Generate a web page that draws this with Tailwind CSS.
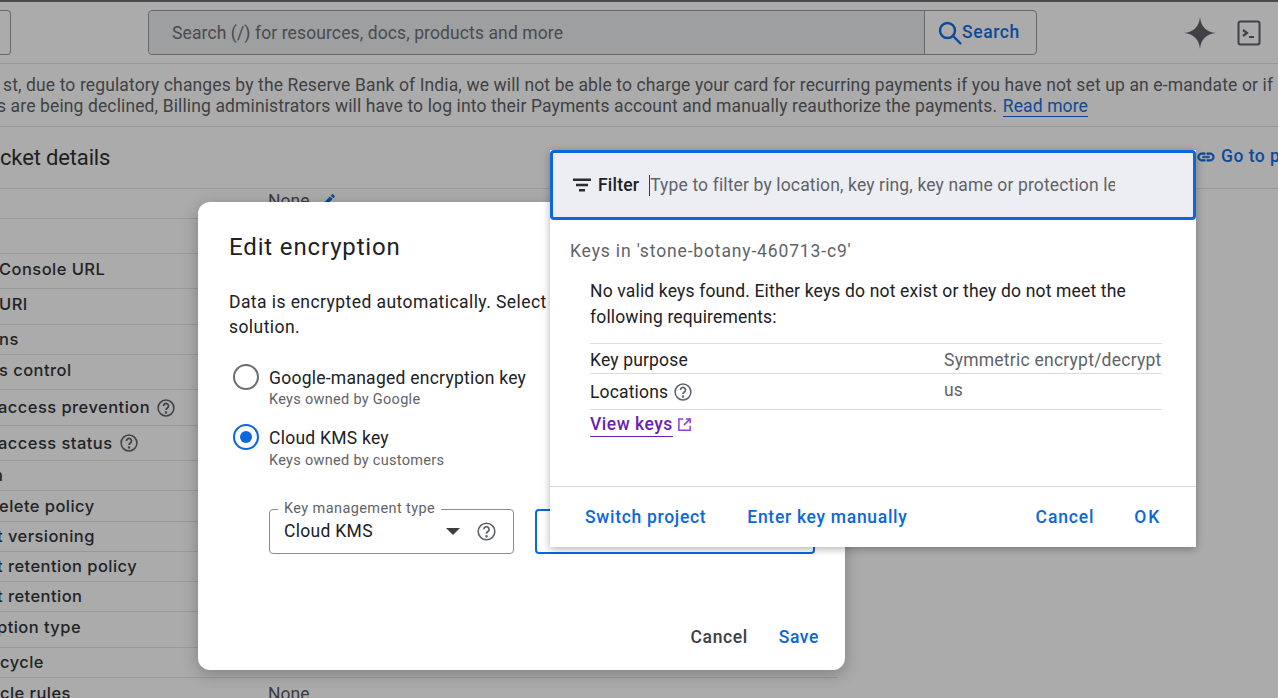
<!DOCTYPE html>
<html lang="en">
  <head>
    <meta charset="UTF-8" />
    <title>Edit encryption</title>
    <script src="https://cdn.jsdelivr.net/npm/@tailwindcss/browser@4"></script>
  </head>
  <body class="bg-[#ababab] font-['Roboto',sans-serif]">
    <div class="relative w-[1278px] h-[698px] overflow-hidden bg-[#ababab] text-[#3b3c3f]">
      <!-- top strip -->
      <div class="h-[2px] bg-[#4b484f]"></div>

      <!-- header -->
      <header class="h-[62px] flex items-start pt-[8px] border-b border-[#98999b]">
        <div class="w-[11px] h-[45px] border border-l-0 border-[#67696c] rounded-r-[4px]"></div>
        <div class="ml-[137px] w-[889px] h-[45px] flex border border-[#67696c] rounded-[4px]">
          <div class="flex-1 flex items-center pl-[23px] pt-[2px] bg-[#9d9fa1] rounded-l-[4px] text-[17.500px] tracking-[0.11px] text-[#494b4e]">Search (/) for resources, docs, products and more</div>
          <div class="w-[112px] flex items-center pl-[13px] border-l border-[#67696c] text-[#0e4a9a] text-[17.500px] font-medium tracking-[0.6px]">
            <svg class="w-[24px] h-[24px] shrink-0" viewBox="0 0 24 24" fill="none" stroke="#0e4a9a" stroke-width="2.400"><circle cx="9.500" cy="9.500" r="7.500"/><path d="M15 15l8 8"/></svg>
            Search
          </div>
        </div>
        <svg class="ml-[146px] mt-[6px] w-[34px] h-[34px]" viewBox="0 0 32 32" fill="#3f4146"><path d="M16 1C16.800 10 22 15.200 31 16 22 16.800 16.800 22 16 31 15.200 22 10 16.800 1 16 10 15.200 15.200 10 16 1Z"/></svg>
        <svg class="ml-[20px] mt-[10px] w-[24px] h-[26px]" viewBox="0 0 24 26" fill="none" stroke="#3f4146" stroke-width="2"><rect x="1.500" y="1.500" width="21" height="23" rx="2"/><path d="M6 10l4 3-4 3" stroke-width="2.200"/><path d="M12 17h5" stroke-width="2"/></svg>
      </header>

      <!-- banner -->
      <div class="h-[63px] pt-[11px] border-b border-[#98999b] whitespace-nowrap text-[17.500px] tracking-[0.125px] leading-[21px] text-[#3f4144]">
        <p class="ml-[3px]">st, due to regulatory changes by the Reserve Bank of India, we will not be able to charge your card for recurring payments if you have not set up an e-mandate or if</p>
        <p class="-ml-[3px]">s are being declined, Billing administrators will have to log into their Payments account and manually reauthorize the payments. <a class="text-[#0e4a9a] border-b border-[#0e4a9a] ml-[1px]">Read more</a></p>
      </div>

      <!-- bucket details heading -->
      <div class="h-[62px] flex items-center justify-between border-b border-[#98999b] whitespace-nowrap pb-[1px]">
        <h2 class="text-[22px] tracking-[-0.15px] text-[#1f2023]">cket details</h2>
        <div class="w-[82px] flex items-center gap-[5px] text-[#0e4a9a] text-[17.500px] font-medium tracking-[0.5px] pb-[1px]">
          <svg class="w-[20px] h-[20px] shrink-0" viewBox="0 0 24 24" fill="#0e4a9a" stroke="#0e4a9a" stroke-width="0.700"><path d="M3.900 12c0-1.710 1.390-3.100 3.100-3.100h4V7H7c-2.760 0-5 2.240-5 5s2.240 5 5 5h4v-1.900H7c-1.710 0-3.100-1.390-3.100-3.100zM8 13h8v-2H8v2zm9-6h-4v1.900h4c1.710 0 3.100 1.390 3.100 3.100s-1.390 3.100-3.100 3.100h-4V17h4c2.760 0 5-2.240 5-5s-2.240-5-5-5z"/></svg>
          Go to p
        </div>
      </div>

      <!-- details table -->
      <div class="w-[838px] font-['Inter',sans-serif] text-[16.500px] font-medium tracking-[0.45px] text-[#222327] whitespace-nowrap [&>div]:border-b [&>div]:border-[#98999b] [&>div]:flex [&>div]:items-center">
        <div class="h-[30px]"><span class="ml-[268px] pb-[4px] font-['Roboto',sans-serif] text-[17.500px] font-normal tracking-normal text-[#3b3c3f]">None</span><svg class="ml-[11px] mb-[6px] w-[17px] h-[17px]" viewBox="0 0 24 24" fill="#0e4a9a"><path d="M3 17.250V21h3.750L17.810 9.940l-3.750-3.750L3 17.250zM20.710 7.040a1 1 0 0 0 0-1.410l-2.340-2.340a1 1 0 0 0-1.410 0l-1.830 1.830 3.750 3.750 1.830-1.830z"/></svg></div>
        <div class="h-[35px]"></div>
        <div class="h-[35px]"><span class="-ml-[1px] pb-[4px]">Console URL</span></div>
        <div class="h-[36px]"><span class="-ml-[1px] pb-[5px]">URI</span></div>
        <div class="h-[30px]"><span class="-ml-[1px] pb-[1px]">ns</span></div>
        <div class="h-[35px]"><span class="-ml-[1px] pb-[4px]">s control</span></div>
        <div class="h-[36px]"><span class="-ml-[2px]">access prevention</span><svg class="ml-[6px] w-[20px] h-[20px]" viewBox="0 0 24 24" fill="none" stroke="#3f4144" stroke-width="1.800"><circle cx="12" cy="12" r="9.500"/><path d="M9 9.500a3 3 0 1 1 4.600 2.500c-1 .7-1.600 1.300-1.600 2.500" stroke-width="2"/><circle cx="12" cy="17.500" r=".6" fill="#3f4144"/></svg></div>
        <div class="h-[35px]"><span class="-ml-[2px]">access status</span><svg class="ml-[6px] w-[20px] h-[20px]" viewBox="0 0 24 24" fill="none" stroke="#3f4144" stroke-width="1.800"><circle cx="12" cy="12" r="9.500"/><path d="M9 9.500a3 3 0 1 1 4.600 2.500c-1 .7-1.600 1.300-1.600 2.500" stroke-width="2"/><circle cx="12" cy="17.500" r=".6" fill="#3f4144"/></svg></div>
        <div class="h-[30px]"><span class="-ml-[7px]">n</span></div>
        <div class="h-[31px]"><span class="-ml-[1px]">elete policy</span></div>
        <div class="h-[30px]"><span class="-ml-[3px]">t versioning</span></div>
        <div class="h-[30px]"><span class="-ml-[3px] pb-[1px]">t retention policy</span></div>
        <div class="h-[30px]"><span class="-ml-[3px]">t retention</span></div>
        <div class="h-[36px]"><span class="-ml-[3px] pb-[5px]">ption type</span></div>
        <div class="h-[30px]"><span>cycle</span></div>
        <div class="h-[30px] !border-b-0 pt-[2px]"><span class="w-[268px] pb-[1px]">cle rules</span><span class="font-['Roboto',sans-serif] text-[17.500px] font-normal tracking-normal text-[#3b3c3f]">None</span></div>
      </div>

      <!-- edit encryption dialog -->
      <div class="absolute left-[198px] top-[202px] w-[647px] h-[468px] bg-white rounded-[12px] shadow-[0_4px_16px_rgba(0,0,0,0.25)] text-[#202124]">
        <h1 class="mt-[28px] ml-[31px] text-[24px] leading-[34px] tracking-[0.85px]">Edit encryption</h1>
        <p class="mt-[26px] ml-[31px] w-[360px] text-[17.500px] leading-[25px] tracking-[0.43px]">Data is encrypted automatically. Select<br />solution.</p>

        <div class="mt-[26px] ml-[35px] flex">
          <span class="-mt-[2px] w-[26px] h-[26px] rounded-full border-2 border-[#6b6e72]"></span>
          <div class="ml-[10px]">
            <div class="text-[17.500px] leading-[24px] tracking-[0.25px]">Google-managed encryption key</div>
            <div class="text-[14.500px] leading-[19px] text-[#5f6368] tracking-[0.3px]">Keys owned by Google</div>
          </div>
        </div>
        <div class="mt-[17px] ml-[35px] flex">
          <span class="-mt-[2px] w-[26px] h-[26px] rounded-full border-2 border-[#0b67db] flex items-center justify-center"><span class="w-[12px] h-[12px] rounded-full bg-[#0b67db]"></span></span>
          <div class="ml-[10px]">
            <div class="text-[17.500px] leading-[24px] tracking-[0.25px]">Cloud KMS key</div>
            <div class="mt-[1px] text-[14.500px] leading-[19px] text-[#5f6368] tracking-[0.3px]">Keys owned by customers</div>
          </div>
        </div>

        <div class="mt-[39px] ml-[71px] flex gap-[21px]">
          <div class="relative w-[245px] h-[45px] border border-[#8a8c90] rounded-[4px] flex items-center pl-[14px] text-[17.500px]">
            <span class="absolute -top-[10px] left-[8px] px-[6px] bg-white text-[14.500px] leading-[18px] tracking-[0.4px] text-[#5f6368]">Key management type</span>
            <span class="w-[162px] tracking-[0.3px] text-[#202124]">Cloud KMS</span>
            <span class="w-0 h-0 border-x-[7px] border-x-transparent border-t-[7px] border-t-[#3b3c3f]"></span>
            <svg class="ml-[16px] w-[21px] h-[21px]" viewBox="0 0 24 24" fill="none" stroke="#5f6368" stroke-width="1.800"><circle cx="12" cy="12" r="9.500"/><path d="M9 9.500a3 3 0 1 1 4.600 2.500c-1 .7-1.600 1.300-1.600 2.500" stroke-width="2"/><circle cx="12" cy="17.500" r=".6" fill="#5f6368"/></svg>
          </div>
          <div class="w-[280px] h-[45px] border-2 border-[#0b67db] rounded-[4px]"></div>
        </div>

        <div class="mt-[70px] mr-[26px] flex justify-end gap-[31px] text-[17.500px] font-medium tracking-[0.6px]">
          <span class="text-[#3c4043]">Cancel</span>
          <span class="text-[#0b67db]">Save</span>
        </div>
      </div>

      <!-- key picker menu -->
      <div class="absolute left-[550px] top-[150px] w-[646px] h-[397px] bg-white shadow-[0_2px_8px_rgba(0,0,0,0.3)]">
        <div class="h-[70px] flex items-center bg-[#edeef3] border-[3px] border-[#0b67db] rounded-[4px] pl-[20px]">
          <svg class="w-[18px] h-[14px] shrink-0" viewBox="0 0 18 14" fill="#2b2c30"><path d="M0 .500h18v2.500H0zM3 5.700h12v2.500H3zM6 11h6v2.500H6z"/></svg>
          <span class="ml-[7px] text-[17.500px] font-medium tracking-[0.2px] text-[#202124]">Filter</span>
          <span class="ml-[10px] w-[466px] overflow-hidden whitespace-nowrap border-l border-[#3b3c3f] text-[17.500px] leading-[21px] tracking-[0.14px] text-[#5f6368]">Type to filter by location, key ring, key name or protection level</span>
        </div>

        <div class="pt-[19px] pl-[20px] text-[17.500px] leading-[24px] tracking-[0.85px] text-[#5f6368]">Keys in 'stone-botany-460713-c9'</div>

        <div class="mt-[15px] ml-[40px] w-[572px] text-[17.500px] tracking-[0.16px] text-[#202124]">
          <p class="leading-[26px]">No valid keys found. Either keys do not exist or they do not meet the<br />following requirements:</p>
          <div class="mt-[13px] h-[31px] flex items-center pt-[3px] border-t border-b border-[#dadce0]">
            <span class="w-[354px]">Key purpose</span><span class="text-[#5f6368] tracking-[0.24px] whitespace-nowrap">Symmetric encrypt/decrypt</span>
          </div>
          <div class="h-[36px] flex items-start pt-[5px] border-b border-[#dadce0]">
            <span class="flex items-center w-[354px]">Locations<svg class="ml-[5px] w-[20px] h-[20px]" viewBox="0 0 24 24" fill="none" stroke="#5f6368" stroke-width="1.800"><circle cx="12" cy="12" r="9.500"/><path d="M9 9.500a3 3 0 1 1 4.600 2.500c-1 .7-1.600 1.300-1.600 2.500" stroke-width="2"/><circle cx="12" cy="17.500" r=".6" fill="#5f6368"/></svg></span><span class="text-[#5f6368] -mt-[2px]">us</span>
          </div>
          <div class="mt-[2px] flex items-center font-medium tracking-[0.5px] text-[#6a1fb0]">
            <a class="border-b border-[#6a1fb0] leading-[24px]">View keys</a>
            <svg class="ml-[4px] w-[15px] h-[15px]" viewBox="0 0 24 24" fill="none" stroke="#8f3fd6" stroke-width="2.400"><path d="M10 3H3v18h18v-7"/><path d="M14 3h7v7"/><path d="M21 3L11 13"/></svg>
          </div>
        </div>

        <div class="absolute left-0 right-0 top-[336px] h-[61px] border-t border-[#dadce0] flex items-center pl-[35px] pr-[35px] text-[17.500px] font-medium tracking-[0.7px] text-[#0b67db]">
          <span>Switch project</span>
          <span class="ml-[41px]">Enter key manually</span>
          <span class="ml-auto mr-[1px] tracking-[0.85px]">Cancel</span>
          <span class="ml-[39px] tracking-[1.800px]">OK</span>
        </div>
      </div>
    </div>
  </body>
</html>
